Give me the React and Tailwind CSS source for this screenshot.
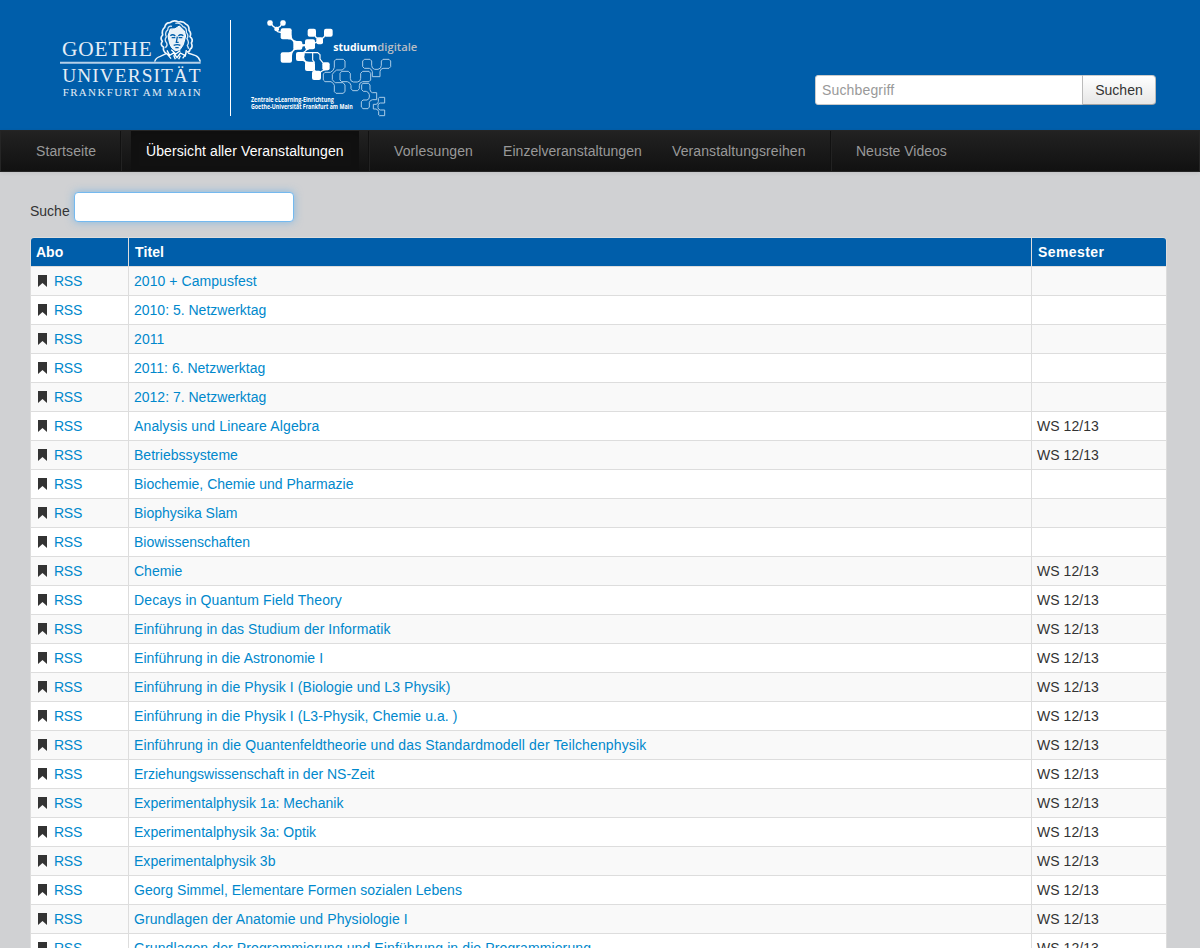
import React from "react";

const WS = "WS 12/13";
// title, semester, tracking of the title
const ROWS = [
  ["2010 + Campusfest", "", "tracking-[0.06px]"],
  ["2010: 5. Netzwerktag", "", ""],
  ["2011", "", "tracking-[0.1px]"],
  ["2011: 6. Netzwerktag", "", ""],
  ["2012: 7. Netzwerktag", "", ""],
  ["Analysis und Lineare Algebra", WS, "tracking-[0.15px]"],
  ["Betriebssysteme", WS, "tracking-[0.03px]"],
  ["Biochemie, Chemie und Pharmazie", "", ""],
  ["Biophysika Slam", "", ""],
  ["Biowissenschaften", "", ""],
  ["Chemie", WS, ""],
  ["Decays in Quantum Field Theory", WS, "tracking-[0.12px]"],
  ["Einführung in das Studium der Informatik", WS, "tracking-[0.07px]"],
  ["Einführung in die Astronomie I", WS, "tracking-[0.08px]"],
  ["Einführung in die Physik I (Biologie und L3 Physik)", WS, "tracking-[0.07px]"],
  ["Einführung in die Physik I (L3-Physik, Chemie u.a. )", WS, "tracking-[0.07px]"],
  ["Einführung in die Quantenfeldtheorie und das Standardmodell der Teilchenphysik", WS, "tracking-[0.125px]"],
  ["Erziehungswissenschaft in der NS-Zeit", WS, ""],
  ["Experimentalphysik 1a: Mechanik", WS, "tracking-[0.03px]"],
  ["Experimentalphysik 3a: Optik", WS, "tracking-[0.03px]"],
  ["Experimentalphysik 3b", WS, "tracking-[0.03px]"],
  ["Georg Simmel, Elementare Formen sozialen Lebens", WS, "tracking-[0.04px]"],
  ["Grundlagen der Anatomie und Physiologie I", WS, "tracking-[0.09px]"],
  ["Grundlagen der Programmierung und Einführung in die Programmierung", WS, "tracking-[0.11px]"],
];

// x, y, width, height of the solid cells
const SOLID = [
  [82, 31, 16, 16], [121, 31, 16, 16], [103, 50, 14, 14],
  [122, 55, 33, 33], [160, 93, 27, 26], [195, 88, 30, 30],
  [122, 127, 34, 31], [168, 126, 25, 27], [195, 155, 30, 28],
  [203, 56, 25, 24], [252, 56, 26, 24], [229, 82, 20, 21],
  [247, 157, 22, 24], [216, 182, 27, 28],
];

const OUTLINE = [
  "M288 148H310L315 153V172L307 180H290Q286 182 280 189L277 193V209L284 217Q287 219 291 218H309L315 225V245L309 250H288L283 245V226Q282 220 273 215H255L250 210V192L255 187H271Q282 182 283 172V153Z",
  "M305 184H325L331 190V205Q331 215 340 216H352Q362 215 362 205V190L368 184H387L392 190V210L387 215H368Q358 217 358 226V236L353 242H338L333 236V226Q331 217 322 215H305L300 210V190Z",
  "M373 148H390L395 153V166Q395 176 404 178H414Q424 176 424 166V153L429 148H447L452 153V170L447 175H429Q420 177 420 185V200H397V185Q395 177 388 175H373L368 170V153Z",
  "M365 224L369 220H386L390 225V238Q390 246 397 248H410V269H398Q390 270 388 277V291L384 296H369L364 291V275L369 270H381Q388 268 388 261V254Q386 246 379 244H370L365 239Z",
  "M418 262H434V279H421Q415 280 414 285V293Q415 299 421 300H434V317H418L416 315V305Q414 298 408 297H400V283H408Q414 282 415 275V265Z",
];

function GoetheLogo() {
  return (
    <svg width="190" height="115" viewBox="0 0 570 345" fill="none">
      <g fill="#e4edf6" fontFamily="'Liberation Serif', serif">
        <text x="36" y="139" fontSize="64" textLength="269" lengthAdjust="spacing">GOETHE</text>
        <text x="37" y="217" fontSize="58" textLength="415" lengthAdjust="spacing">UNIVERSITÄT</text>
        <text x="38" y="258" fontSize="33" textLength="414" lengthAdjust="spacing">FRANKFURT AM MAIN</text>
      </g>
      <path d="M30 158.500H452" stroke="#b5d0e8" strokeWidth="6" />
      <path d="M541.500 30V318" stroke="#fff" strokeWidth="3" />
      <path d="M314 155Q317 143 331 139L350 130M414 129L437 137Q448 142 451 155" stroke="#eef5fb" strokeWidth="4" />
      <path
        d="M350 132Q337 122 341 112Q329 105 337 94Q329 84 338 75Q334 60 344 52Q347 38 360 38Q372 28 385 36Q399 32 408 43Q418 47 417 61Q425 70 420 80Q431 89 424 99Q430 112 420 118Q419 127 409 126"
        stroke="#eef5fb" strokeWidth="5" strokeLinejoin="round"
      />
      <path
        d="M359 101L354 78L361 57Q374 61 388 48L403 63L407 78L400 104L390 119L376 122L365 113Z"
        fill="#e8f1f8" stroke="#fff" strokeWidth="3"
      />
      <path
        d="M346 113Q354 107 350 99Q342 90 349 81Q343 68 353 60Q354 46 366 49M376 40Q391 37 399 50Q411 53 409 67Q417 76 411 86Q419 98 412 106L416 116"
        stroke="#d8e7f4" strokeWidth="4"
      />
      <path d="M361 77Q368 71 376 78M385 78Q392 71 400 77M365 83H376M386 83H397M382 80L379 97H386M371 106Q382 102 391 106M376 113H386" stroke="#005eaa" strokeWidth="4" />
      <path d="M351 121L359 136L371 129L381 143L391 129L406 137L409 120M364 119L377 132L391 122M350 130L363 146M409 130L398 145M371 136L376 148M391 137L386 148" stroke="#fff" strokeWidth="4" />
    </svg>
  );
}

function StudiumDigitaleLogo() {
  return (
    <svg width="190" height="115" viewBox="0 0 570 345" fill="none">
      <g fill="#fff">
        {SOLID.map(([x, y, w, h]) => (
          <rect key={`${x}-${y}`} x={x} y={y} width={w} height={h} rx="6" />
        ))}
        <path d="M144 84L154 75Q155 91 170 93L163 104Q158 87 144 88Z" />
        <path d="M182 98Q190 108 200 98V112Q190 105 182 114Z" />
        <path d="M147 127Q160 126 162 111L172 118Q156 121 156 138Z" />
        <path d="M185 127Q198 126 199 112L208 118Q193 122 193 138Z" />
        <path d="M186 151L193 143Q194 154 206 155L197 164Q197 153 186 152Z" />
      </g>
      <g stroke="#fff" strokeWidth="4">
        <path d="M95 43Q98 50 106 53M124 43Q122 50 114 53M109 60Q113 69 127 66" />
        <path d="M225 76Q227 84 234 86M255 76Q252 84 245 86M225 99L233 95" />
        <path d="M190 128H233L240 134V147L250 160M218 128V150L224 158M265 178Q249 178 240 188M222 178L228 187" strokeWidth="3.500" />
      </g>
      <g stroke="#a9cbe7" strokeWidth="3">
        {OUTLINE.map((d) => <path key={d} d={d} />)}
      </g>
      <g fontFamily="'Open Sans', sans-serif">
        <text x="280" y="123" fontSize="30" fontWeight="700" fill="#fff" textLength="131" lengthAdjust="spacingAndGlyphs">studium</text>
        <text x="412" y="123" fontSize="30" fontWeight="600" fill="#b9bdc4" textLength="120" lengthAdjust="spacingAndGlyphs">digitale</text>
        <text x="33" y="277" fontSize="20" fontWeight="700" fill="#fff" textLength="248" lengthAdjust="spacingAndGlyphs">Zentrale eLearning-Einrichtung</text>
        <text x="33" y="298" fontSize="20" fontWeight="700" fill="#fff" textLength="305" lengthAdjust="spacingAndGlyphs">Goethe-Universität Frankfurt am Main</text>
      </g>
    </svg>
  );
}

function Divider() {
  return <li className="mx-[9px] h-10 w-0.5 border-l border-r border-l-[#111] border-r-[#222]" />;
}

function NavItem({ children, className }) {
  return (
    <li className={`h-10 whitespace-nowrap px-[15px] py-2.5 leading-5 ${className}`}>
      <a href="#">{children}</a>
    </li>
  );
}

function Row({ title, semester, tracking, odd }) {
  return (
    <div className={`grid h-[29px] grid-cols-[97px_903px_1fr] border-t border-[#ddd] leading-5 ${odd ? "bg-[#f9f9f9]" : "bg-white"}`}>
      <div className="flex pl-[7px] pt-1 text-[#0088cc]">
        <svg className="mt-1 shrink-0" width="9" height="12" viewBox="0 0 9 12">
          <path d="M0 0H9V12L4.500 8L0 12Z" fill="#333" />
        </svg>
        <a href="#" className="ml-[7px] tracking-[-0.25px]">RSS</a>
      </div>
      <div className="border-l border-[#ddd] pl-[5px] pt-1 text-[#0088cc]">
        <a href="#" className={tracking}>{title}</a>
      </div>
      <div className="border-l border-[#ddd] pl-[5px] pt-1 tracking-[0.06px]">{semester}</div>
    </div>
  );
}

export default function App() {
  return (
    <div className="h-[948px] w-[1200px] overflow-hidden bg-[#d0d1d3] font-['Liberation_Sans',Arial,sans-serif] text-[14px] leading-5 text-[#333]">
      <header className="flex h-[130px] justify-between bg-[#005eaa] pl-[50px] pr-11 pt-2.5">
        <div className="flex">
          <GoetheLogo />
          <StudiumDigitaleLogo />
        </div>
        <form className="mt-[65px] flex h-[30px] w-[341px]">
          <input
            className="h-[30px] w-[268px] rounded-l-[3px] border border-[#ccc] bg-white px-1.5 text-[14px] tracking-[0.15px] placeholder:text-[#999]"
            placeholder="Suchbegriff"
          />
          <button
            type="button"
            className="-ml-px h-[30px] w-[74px] rounded-r-[4px] border border-[#bbb] border-b-[#a2a2a2] border-t-[#ccc] bg-linear-to-b from-white to-[#e6e6e6] text-[14px]"
          >
            Suchen
          </button>
        </form>
      </header>
      <nav className="relative h-[42px] border border-[#252525] bg-linear-to-b from-[#222] to-[#111] shadow-[0_1px_4px_rgba(0,0,0,0.07)]">
        <ul className="flex pl-5 text-[#999]">
          <NavItem className="w-[90px] tracking-[0.1px]">Startseite</NavItem>
          <Divider />
          <NavItem className="w-[228px] bg-[#111] tracking-[0.1px] text-white shadow-[inset_0_3px_8px_rgba(0,0,0,0.125)]">Übersicht aller Veranstaltungen</NavItem>
          <Divider />
          <NavItem className="w-[109px] tracking-[0.1px]">Vorlesungen</NavItem>
          <NavItem className="w-[169px] tracking-[0.05px]">Einzelveranstaltungen</NavItem>
          <NavItem className="w-[164px] tracking-[0.1px]">Veranstaltungsreihen</NavItem>
          <Divider />
          <NavItem className="w-[122px]">Neuste Videos</NavItem>
        </ul>
      </nav>
      <main className="pl-[30px] pt-5">
        <label className="flex h-[30px]">
          <span className="w-11 pt-[9px]">Suche</span>
          <input className="h-[30px] w-[220px] rounded-[4px] border border-[#74b9ef] bg-white px-1.5 shadow-[0_0_8px_rgba(82,168,236,0.6)] outline-none" />
        </label>
        <section className="mt-[15px] w-[1137px] overflow-hidden rounded-t-[4px] border border-[#ddd]">
          <div className="grid h-7 grid-cols-[97px_903px_1fr] bg-[#005eaa] font-bold leading-5 text-white">
            <div className="pl-[5px] pt-1">Abo</div>
            <div className="border-l border-[#ddd] pl-1.5 pt-1 tracking-[0.1px]">Titel</div>
            <div className="border-l border-[#ddd] pl-1.5 pt-1 tracking-[0.4px]">Semester</div>
          </div>
          {ROWS.map(([title, semester, tracking], i) => (
            <Row key={title} title={title} semester={semester} tracking={tracking} odd={i % 2 === 0} />
          ))}
        </section>
      </main>
    </div>
  );
}
